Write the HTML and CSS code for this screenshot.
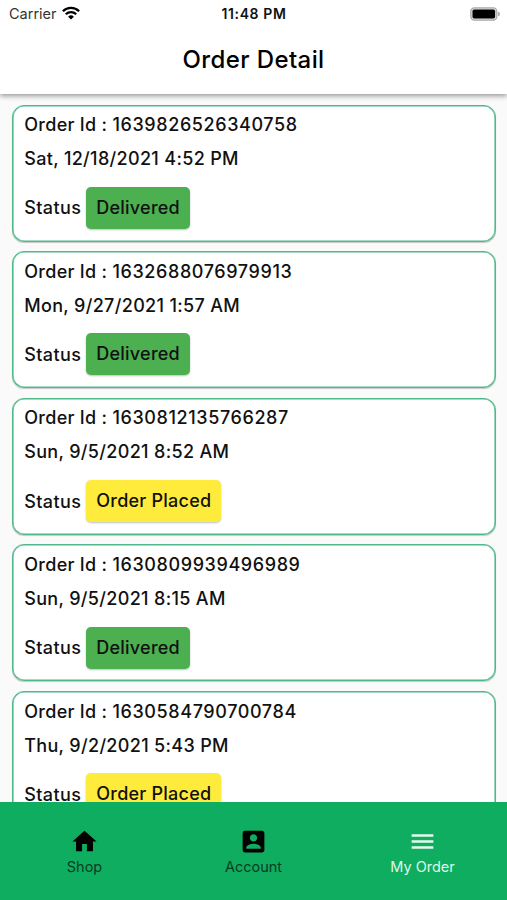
FILE: index.html
```html
<!DOCTYPE html>
<html lang="en">
<head>
<meta charset="utf-8">
<title>Order Detail</title>
<link rel="stylesheet" href="styles.css">
</head>
<body>
<div class="app">
  <header class="header">
    <div class="statusbar">
      <div class="carrier"><span>Carrier</span>
        <svg class="wifi" viewBox="0 0 18 14"><g fill="none" stroke="#000" stroke-width="2.3"><path d="M.9 5.2a11.5 11.5 0 0 1 16.2 0"/><path d="M3.8 8.3a7.4 7.4 0 0 1 10.4 0"/></g><path d="M9 13.6l-2.9-2.9a4.1 4.1 0 0 1 5.8 0z"/></svg>
      </div>
      <div class="clock">11:48 PM</div>
      <svg class="battery" viewBox="0 0 30 14"><rect x=".8" y=".8" width="26" height="12.4" rx="3.6" fill="#ddd" stroke="#aaa" stroke-width="1.3"/><rect x="2.5" y="2.5" width="22.6" height="9" rx="1.8"/><path d="M28 4.7q2 .6 2 2.3t-2 2.3z" fill="#aaa"/></svg>
    </div>
    <h1 class="title">Order Detail</h1>
  </header>
  <main class="list">
    <article class="card"><p class="id"><span class="label">Order Id : </span>1639826526340758</p><p class="date">Sat, 12/18/2021 4:52 PM</p><div class="status"><span>Status</span><span class="badge delivered">Delivered</span></div></article>
    <article class="card"><p class="id"><span class="label">Order Id : </span>1632688076979913</p><p class="date">Mon, 9/27/2021 1:57 AM</p><div class="status"><span>Status</span><span class="badge delivered">Delivered</span></div></article>
    <article class="card"><p class="id"><span class="label">Order Id : </span>1630812135766287</p><p class="date">Sun, 9/5/2021 8:52 AM</p><div class="status"><span>Status</span><span class="badge placed">Order Placed</span></div></article>
    <article class="card"><p class="id"><span class="label">Order Id : </span>1630809939496989</p><p class="date">Sun, 9/5/2021 8:15 AM</p><div class="status"><span>Status</span><span class="badge delivered">Delivered</span></div></article>
    <article class="card"><p class="id"><span class="label">Order Id : </span>1630584790700784</p><p class="date">Thu, 9/2/2021 5:43 PM</p><div class="status"><span>Status</span><span class="badge placed">Order Placed</span></div></article>
  </main>
  <nav class="tabs">
    <a class="tab"><svg viewBox="0 0 24 24"><path d="M10 20v-6h4v6h5v-8h3L12 3 2 12h3v8z"/></svg><span>Shop</span></a>
    <a class="tab"><svg viewBox="0 0 24 24"><path d="M3 5v14a2 2 0 0 0 2 2h14c1.100 0 2-.9 2-2V5c0-1.100-.9-2-2-2H5a2 2 0 0 0-2 2zm12 4c0 1.660-1.340 3-3 3s-3-1.340-3-3 1.340-3 3-3 3 1.340 3 3zm-9 8c0-2 4-3.100 6-3.100s6 1.100 6 3.100v1H6v-1z"/></svg><span>Account</span></a>
    <a class="tab active"><svg viewBox="0 0 24 24"><path d="M3 18h18v-2H3v2zm0-5h18v-2H3v2zm0-7v2h18V6H3z"/></svg><span>My Order</span></a>
  </nav>
</div>
</body>
</html>
```
FILE: styles.css
```css
* { box-sizing: border-box; }
body { margin: 0; font-family: Inter, "Liberation Sans", sans-serif; color: #111; }
.app { height: 900px; display: flex; flex-direction: column; overflow: hidden; background: #fafafa; }
.header { flex: none; height: 94px; background: #fff; position: relative; z-index: 1; box-shadow: 0 2px 5px rgba(0,0,0,.4); }
.statusbar { height: 27px; padding: 0 7px 0 9px; display: grid; grid-template-columns: 1fr auto 1fr; align-items: center; }
.carrier { display: flex; align-items: center; gap: 5px; font-size: 14.5px; color: #333; }
.wifi { width: 18px; height: 14px; margin-top: -2px; }
.clock { font-size: 14px; font-weight: 600; letter-spacing: .6px; margin-left: -1px; }
.battery { width: 30px; height: 14px; justify-self: end; }
.title { margin: 0; height: 66px; line-height: 66px; text-align: center; font-size: 24px; font-weight: 450; letter-spacing: .4px; color: #000; }
.list { flex: 1; min-height: 0; overflow: hidden; padding: 10.5px 11px 0 12px; }
.card { height: 137px; margin-bottom: 9.6px; padding: 7.800px 11.200px; background: #fff; border: 1px solid #4fb98b; border-radius: 12px; box-shadow: inset 0 0 0 .6px #4fb98b, 0 1px 1px rgba(0,0,0,.2); font-size: 18px; font-weight: 500; letter-spacing: .4px; }
.card p { margin: 0; height: 24px; line-height: 24px; white-space: nowrap; }
.card .id { letter-spacing: .6px; }
.label { letter-spacing: .3px; }
.card .date { margin-top: 10px; letter-spacing: .33px; }
.status { margin-top: 15.600px; display: flex; align-items: center; gap: 5px; }
.badge { height: 42px; line-height: 42px; padding: 0 10px; border-radius: 5px; letter-spacing: .23px; box-shadow: 0 1px 2px rgba(0,0,0,.25); }
.delivered { background: #4caf50; }
.placed { background: #ffeb3b; }
.tabs { flex: none; height: 98px; display: grid; grid-template-columns: repeat(3, 1fr); background: #0fad60; }
.tab { display: flex; flex-direction: column; align-items: center; padding-top: 25px; font-size: 14.500px; line-height: 20px; letter-spacing: 0; color: #073c22; }
.tab svg { width: 29px; height: 29px; margin-bottom: 1px; fill: #000; }
.active { color: #dff8e9; }
.active svg { fill: #e5faee; }
```
